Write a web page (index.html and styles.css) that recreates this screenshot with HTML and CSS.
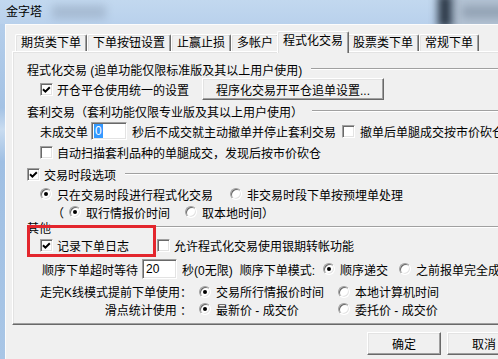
FILE: index.html
```html
<!DOCTYPE html>
<html lang="zh-CN">

<head>
    <meta charset="UTF-8">
    <meta name="viewport" content="width=device-width, initial-scale=1.0">
    <title>金字塔</title>
    <link rel="stylesheet" href="styles.css">
</head>

<body>
    <div class="window">
        <div class="titlebar">
            <span class="blur blur-title"></span>
            <span class="blur blur-glass"></span>
            <span class="blur blur-edge"></span>
            <span class="blur blur-close"></span>
            <span class="title">金字塔</span>
        </div>

        <div class="client">
            <div class="tabs">
                <div class="tab">期货类下单</div>
                <div class="tab">下单按钮设置</div>
                <div class="tab">止赢止损</div>
                <div class="tab">多帐户</div>
                <div class="tab active">程式化交易</div>
                <div class="tab">股票类下单</div>
                <div class="tab">常规下单</div>
            </div>

            <div class="panel">
                <div class="row group h18">
                    <span>程式化交易 (追单功能仅限标准版及其以上用户使用)</span>
                    <span class="rule"></span>
                </div>
                <div class="row h22 indent">
                    <span class="opt">
                        <span class="check"><svg width="11" height="11" viewBox="0 0 11 11"><path d="M2 5.2 L4.4 7.6 L8.8 3.2" fill="none" stroke="#000" stroke-width="2"/></svg></span>
                        开仓平仓使用统一的设置
                    </span>
                    <button class="btn setup">程序化交易开平仓追单设置...</button>
                </div>

                <div class="row group h22">
                    <span>套利交易（套利功能仅限专业版及其以上用户使用）</span>
                    <span class="rule"></span>
                </div>
                <div class="row h18 indent">
                    <span>未成交单</span>
                    <span class="field first"><span class="sel">0</span></span>
                    <span class="after-field">秒后不成交就主动撤单并停止套利交易</span>
                    <span class="opt cancel-leg">
                        <span class="check"></span>
                        撤单后单腿成交按市价砍仓
                    </span>
                </div>
                <div class="row h24 indent">
                    <span class="opt">
                        <span class="check"></span>
                        自动扫描套利品种的单腿成交，发现后按市价砍仓
                    </span>
                </div>

                <div class="row group h20">
                    <span class="opt">
                        <span class="check"><svg width="11" height="11" viewBox="0 0 11 11"><path d="M2 5.2 L4.4 7.6 L8.8 3.2" fill="none" stroke="#000" stroke-width="2"/></svg></span>
                        交易时段选项
                    </span>
                    <span class="rule"></span>
                </div>
                <div class="row h20 indent">
                    <span class="opt w190"><span class="radio on"></span>只在交易时段进行程式化交易</span>
                    <span class="opt"><span class="radio"></span>非交易时段下单按预埋单处理</span>
                </div>
                <div class="row h16 indent-paren">
                    <span>（</span>
                    <span class="opt w116 paren-first"><span class="radio on"></span>取行情报价时间</span>
                    <span class="opt"><span class="radio"></span>取本地时间）</span>
                </div>

                <div class="row group h14">
                    <span>其他</span>
                    <span class="rule"></span>
                </div>
                <div class="row h22 indent">
                    <span class="opt w117">
                        <span class="check"><svg width="11" height="11" viewBox="0 0 11 11"><path d="M2 5.2 L4.4 7.6 L8.8 3.2" fill="none" stroke="#000" stroke-width="2"/></svg></span>
                        记录下单日志
                    </span>
                    <span class="opt">
                        <span class="check"></span>
                        允许程式化交易使用银期转帐功能
                    </span>
                </div>
                <div class="row h26 indent-wait">
                    <span>顺序下单超时等待</span>
                    <span class="field tall">20</span>
                    <span class="after-field">秒(0无限)</span>
                    <span class="mode-label">顺序下单模式:</span>
                    <span class="opt w76 mode-first"><span class="radio on"></span>顺序递交</span>
                    <span class="opt"><span class="radio"></span>之前报单完全成交后再递交</span>
                </div>
                <div class="row h19">
                    <span class="label">走完K线模式提前下单使用：</span>
                    <span class="opt w139"><span class="radio on"></span>交易所行情报价时间</span>
                    <span class="opt"><span class="radio"></span>本地计算机时间</span>
                </div>
                <div class="row h16">
                    <span class="label">滑点统计使用 ：</span>
                    <span class="opt w139"><span class="radio on"></span>最新价 - 成交价</span>
                    <span class="opt"><span class="radio"></span>委托价 - 成交价</span>
                </div>

                <div class="mark"></div>
            </div>

            <div class="actions">
                <button class="btn action">确定</button>
                <button class="btn action">取消</button>
            </div>
        </div>
    </div>
</body>

</html>
```

FILE: styles.css
```css
* {
    box-sizing: border-box;
}

body {
    margin: 0;
    width: 498px;
    height: 359px;
    overflow: hidden;
    background: linear-gradient(#b9d1ec, #a4c2e4 30%, #c9dcf0 36%, #9fbfe3 45%, #a9c6e6 100%);
    font-family: "Liberation Sans", "Noto Sans CJK SC", sans-serif;
    font-size: 12px;
    color: #000;
}

.window {
    width: 536px;
}

/* title bar */
.titlebar {
    position: relative;
    height: 24px;
    padding-left: 6px;
    line-height: 24px;
    background: linear-gradient(#c2d8ef, #b9d1ec);
    overflow: hidden;
}

.title {
    position: relative;
}

.blur {
    position: absolute;
    filter: blur(4px);
}

.blur-title {
    left: 52px;
    top: 5px;
    width: 54px;
    height: 14px;
    background: #8b9db3;
    opacity: 0.45;
}

.blur-glass {
    left: 452px;
    top: -6px;
    width: 70px;
    height: 36px;
    background: #b3c2d3;
    filter: blur(3px);
}

.blur-edge {
    left: 438px;
    top: -6px;
    width: 14px;
    height: 34px;
    background: #2a3644;
}

.blur-close {
    left: 462px;
    top: 6px;
    width: 50px;
    height: 12px;
    background: #7d8da0;
    opacity: 0.6;
}

/* dialog body */
.client {
    margin-left: 5px;
    width: 526px;
    height: 335px;
    padding: 6px 7px 0 6px;
    background: #f0f0f0;
    border-top: 1px solid #fcfcfc;
    border-left: 1px solid #fcfcfc;
}

.tabs {
    display: flex;
    align-items: flex-end;
    height: 20px;
    padding-left: 3px;
}

.tab {
    height: 17px;
    padding: 0 5px;
    border: 1px solid;
    border-bottom: 0;
    border-color: #fff #696969 #fff #fff;
    border-radius: 2px 2px 0 0;
    box-shadow: inset -1px 0 #a0a0a0, inset 1px 1px #e3e3e3;
    line-height: 16px;
    white-space: nowrap;
}

.tab.active {
    position: relative;
    z-index: 1;
    height: 22px;
    margin: 0 -2px -2px;
    background: #f0f0f0;
    line-height: 18px;
}

.panel {
    position: relative;
    height: 274px;
    padding: 8px 8px 0 14px;
    border: 1px solid;
    border-color: #fff #696969 #696969 #fff;
    box-shadow: inset -1px -1px #a0a0a0, inset 1px 1px #e3e3e3;
    white-space: nowrap;
}

.row {
    display: flex;
    align-items: center;
}

.row > * {
    flex: none;
}

.h14 { height: 14px; }
.h16 { height: 16px; }
.h18 { height: 18px; }
.h19 { height: 19px; }
.h20 { height: 20px; }
.h22 { height: 22px; }
.h24 { height: 24px; }
.h26 { height: 26px; }

.indent {
    padding-left: 13px;
}

.indent-paren {
    padding-left: 25px;
}

.indent-wait {
    padding-left: 15px;
}

.row > .rule {
    flex: 1;
    height: 2px;
    margin-left: 9px;
    border-top: 1px solid #a0a0a0;
    border-bottom: 1px solid #fff;
}

/* options */
.opt {
    display: flex;
    align-items: center;
    gap: 4px;
}

.w76 { width: 76px; }
.w116 { width: 116px; }
.w117 { width: 117px; }
.w139 { width: 139px; }
.w190 { width: 190px; }

.check {
    display: flex;
    align-items: center;
    justify-content: center;
    width: 13px;
    height: 13px;
    flex: none;
    background: #fff;
    border: 1px solid;
    border-color: #a0a0a0 #fff #fff #a0a0a0;
    box-shadow: inset 1px 1px #696969, inset -1px -1px #e3e3e3;
}

.radio {
    display: flex;
    align-items: center;
    justify-content: center;
    width: 12px;
    height: 12px;
    margin-right: 1px;
    flex: none;
    background: #fff;
    border: 1px solid;
    border-color: #a0a0a0 #fff #fff #a0a0a0;
    border-radius: 50%;
    box-shadow: inset 1px 1px #696969, inset -1px -1px #e3e3e3;
}

.radio.on::after {
    content: "";
    width: 4px;
    height: 4px;
    border-radius: 50%;
    background: #000;
}

.field {
    display: flex;
    align-items: center;
    width: 36px;
    height: 18px;
    padding: 0 2px;
    background: #fff;
    border: 1px solid;
    border-color: #a0a0a0 #fff #fff #a0a0a0;
    box-shadow: inset 1px 1px #696969, inset -1px -1px #e3e3e3;
}

.field.first {
    margin-left: 3px;
}

.field.tall {
    width: 35px;
    height: 20px;
    margin-left: 4px;
    padding-left: 3px;
}

.sel {
    padding: 0 1px;
    line-height: 14px;
    background: #3399ff;
    color: #fff;
}

.after-field {
    margin-left: 5px;
}

.cancel-leg {
    margin-left: 6px;
    gap: 5px;
}

.paren-first {
    margin-left: 5px;
}

.mode-label {
    margin-left: 7px;
}

.mode-first {
    margin-left: 8px;
}

.label {
    width: 165px;
    margin-right: 7px;
    text-align: right;
}

/* buttons */
.btn {
    padding: 0;
    font: inherit;
    color: #000;
    background: #f0f0f0;
    border: 1px solid;
    border-color: #fff #696969 #696969 #fff;
    box-shadow: inset -1px -1px #a0a0a0, inset 1px 1px #e3e3e3;
}

.setup {
    width: 182px;
    height: 22px;
    margin-left: 13px;
}

.actions {
    display: flex;
    justify-content: flex-end;
    gap: 6px;
    margin-top: 7px;
    padding-right: 3px;
}

.action {
    width: 74px;
    height: 23px;
}

/* red highlight drawn over the dialog */
.mark {
    position: absolute;
    left: 14px;
    top: 173px;
    width: 129px;
    height: 32px;
    border: 3px solid #e3262d;
}
```
